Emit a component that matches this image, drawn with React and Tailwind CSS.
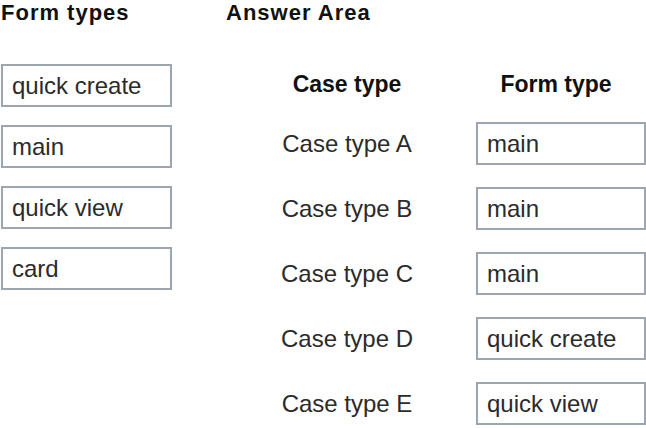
import React from 'react';

const formTypes = ['quick create', 'main', 'quick view', 'card'];

const answers = [
  { caseType: 'Case type A', formType: 'main' },
  { caseType: 'Case type B', formType: 'main' },
  { caseType: 'Case type C', formType: 'main' },
  { caseType: 'Case type D', formType: 'quick create' },
  { caseType: 'Case type E', formType: 'quick view' },
];

function Box({ children }) {
  return (
    <div className="h-[43px] border-2 border-[#9ca6b0] bg-white flex items-center pl-[9px] text-[24px] leading-none text-[#2b2b2b]">
      {children}
    </div>
  );
}

export default function App() {
  return (
    <div
      className="w-[646px] h-[428px] bg-white flex overflow-hidden"
      style={{ fontFamily: '"Liberation Sans", Arial, sans-serif' }}
    >
      {/* Form types */}
      <div className="w-[171px] ml-[1px] flex flex-col">
        <h2 className="text-[22px] leading-[25px] font-bold tracking-[1px] text-[#111]">Form types</h2>
        <div className="mt-[39px] flex flex-col gap-[18px]">
          {formTypes.map(t => (
            <Box key={t}>{t}</Box>
          ))}
        </div>
      </div>

      {/* Answer Area */}
      <div className="ml-[54px] flex-1 flex flex-col">
        <h2 className="text-[22px] leading-[25px] font-bold tracking-[1px] text-[#111]">Answer Area</h2>
        <div className="mt-[46px] grid grid-cols-[242px_170px] gap-x-[8px]">
          <div className="text-center text-[23px] leading-[26px] font-bold text-[#111]">Case type</div>
          <div className="text-center text-[23px] leading-[26px] font-bold text-[#111] pr-[10px]">Form type</div>
        </div>
        <div className="mt-[25px] flex flex-col gap-[22px]">
          {answers.map(a => (
            <div key={a.caseType} className="grid grid-cols-[242px_170px] gap-x-[8px] items-center">
              <div className="text-center text-[24px] leading-none text-[#2b2b2b]">{a.caseType}</div>
              <Box>{a.formType}</Box>
            </div>
          ))}
        </div>
      </div>
    </div>
  );
}
